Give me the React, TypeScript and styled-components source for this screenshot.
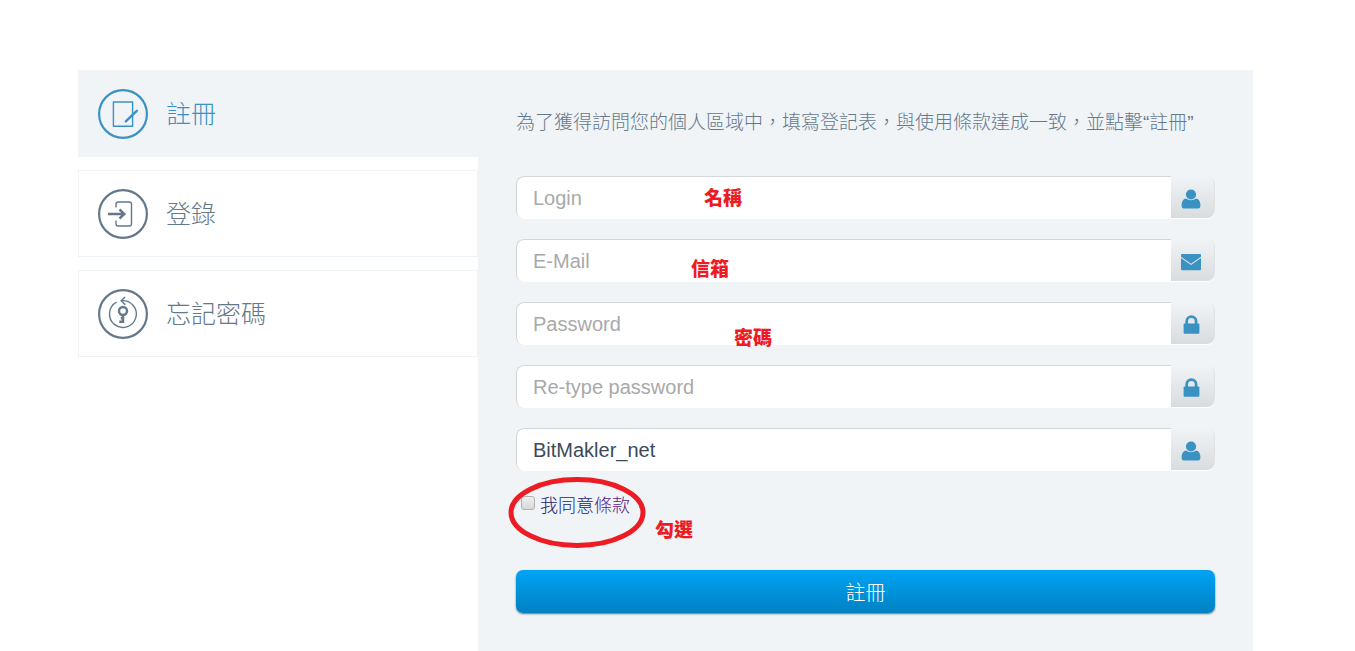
import React from "react";
import styled, { createGlobalStyle } from "styled-components";

const sans = `"Liberation Sans", Arial, "Noto Sans CJK TC", sans-serif`;
const accent = "#3a92c3";
const slate = "#64788a";
const panel = "#f0f4f7";

const GlobalStyle = createGlobalStyle`
  *, *::before, *::after { box-sizing: border-box; }
  body { margin: 0; background: #fff; font-family: ${sans}; }
`;

const Page = styled.main`
  display: flex;
  align-items: stretch;
  padding: 70px 102px 0 78px;
`;

const Tabs = styled.nav`
  flex: 0 0 400px;
  display: flex;
  flex-direction: column;
  gap: 13px;
`;

const Tab = styled.a<{ $active?: boolean }>`
  display: flex;
  align-items: center;
  gap: 18px;
  height: 87px;
  padding: 0 19px;
  border: 1px solid ${panel};
  background: ${(p) => (p.$active ? panel : "#fff")};
  color: ${(p) => (p.$active ? accent : slate)};
  font-size: 25px;
  font-weight: 300;
  line-height: 36px;
  text-decoration: none;
`;

const Panel = styled.form`
  flex: 1;
  min-width: 0;
  padding: 38px;
  background: ${panel};
`;

const Intro = styled.p`
  margin: 0 0 38px;
  color: #66788a;
  font-size: 19px;
  font-weight: 300;
  line-height: 30px;
`;

const Fields = styled.div`
  display: flex;
  flex-direction: column;
  gap: 20px;
`;

const Field = styled.label`
  position: relative;
  display: flex;
  height: 43px;
  border-radius: 8px;
  background: #fff;
`;

const TextInput = styled.input`
  flex: 1;
  min-width: 0;
  height: 43px;
  padding: 0 16px;
  border: 0 solid #d3d7da;
  border-width: 1px 0 0 1px;
  border-radius: 8px 0 0 8px;
  outline: 0;
  background: #fff;
  color: #3b4a5a;
  font-family: ${sans};
  font-size: 20px;
  &::placeholder { color: #a9a9a9; opacity: 1; }
`;

const Addon = styled.span`
  flex: 0 0 44px;
  display: flex;
  align-items: center;
  justify-content: center;
  height: 42px;
  padding: 4px 4px 0 0;
  border-right: 1px solid #dfe3e6;
  border-radius: 0 8px 8px 0;
  background: linear-gradient(#f0f4f7, #d9dcdf);
  color: ${accent};
`;

const Note = styled.span<{ $left: number; $top: number }>`
  position: absolute;
  left: ${(p) => p.$left}px;
  top: ${(p) => p.$top}px;
  color: #ed1c24;
  font-family: "Noto Sans CJK TC", sans-serif;
  font-size: 19px;
  font-weight: 900;
  line-height: 20px;
  white-space: nowrap;
  pointer-events: none;
`;

const Agree = styled.div`
  position: relative;
  display: flex;
  align-items: flex-start;
  gap: 5px;
  margin: 20px 0 49px;
  padding-left: 5px;
  color: #23236f;
  font-size: 18px;
  font-weight: 300;
  line-height: 30px;
`;

const Checkbox = styled.input`
  appearance: none;
  width: 14px;
  height: 14px;
  margin: 5px 0 0;
  border: 1px solid #b0b0b0;
  border-radius: 3px;
  background: linear-gradient(#eee, #d8d8d8);
  &:checked { background: ${accent}; }
`;

const TermsLink = styled.a`
  color: #551a8b;
  text-decoration: none;
`;

const Ring = styled.svg`
  position: absolute;
  left: -8px;
  top: -15px;
  overflow: visible;
  pointer-events: none;
`;

const Submit = styled.button`
  display: block;
  width: 100%;
  height: 43px;
  padding: 2px 0 0;
  border: 0;
  border-radius: 7px;
  background: linear-gradient(#00a4f5, #0081c2);
  box-shadow: 0 1px 2px rgba(0, 0, 0, 0.55);
  color: #fff;
  font-family: ${sans};
  font-size: 20px;
  font-weight: 300;
  line-height: 40px;
`;

function Badge({ color, children }: { color: string; children: React.ReactNode }) {
  return (
    <svg width="50" height="50" viewBox="0 0 50 50" fill="none" stroke={color} aria-hidden="true">
      <circle cx="25" cy="25" r="23.9" strokeWidth="2.2" />
      {children}
    </svg>
  );
}

const RegisterIcon = () => (
  <Badge color={accent}>
    <rect x="15.4" y="13" width="19.2" height="24.2" strokeWidth="1.4" strokeLinejoin="round" />
    <path d="M27.8 32.4L38.8 21.8" strokeWidth="2.4" strokeLinecap="round" />
  </Badge>
);

const LoginIcon = () => (
  <Badge color={slate}>
    <path d="M18 18.5V15.2Q18 13 20.2 13H31.3Q33.5 13 33.5 15.2V34.8Q33.5 37 31.3 37H20.2Q18 37 18 34.8V31.5" strokeWidth="1.4" />
    <path d="M10 25H26M21.5 20.5L26.3 25L21.5 29.5" strokeWidth="2.4" />
  </Badge>
);

const RecoverIcon = () => (
  <Badge color={slate}>
    <path d="M23.5 11.7A13.4 13.4 0 1 1 18.6 13.2" strokeWidth="1.4" />
    <path d="M27 8L23.2 11.8L27.3 15.8" strokeWidth="1.5" />
    <circle cx="25" cy="22" r="4" strokeWidth="2.4" />
    <path d="M25 26V34M25 32.7H21.3M25 29.3H22.8" strokeWidth="2.4" />
  </Badge>
);

const UserIcon = () => (
  <svg width="20" height="20" viewBox="0 0 20 20" fill="currentColor" aria-hidden="true">
    <circle cx="10" cy="5.5" r="5.1" />
    <path d="M4.8 9.6Q10 13 15.2 9.6Q19.4 10.6 19.4 16.6Q19.4 19.6 17.2 19.6H2.8Q0.6 19.6 0.6 16.6Q0.6 10.6 4.8 9.6Z" />
  </svg>
);

const MailIcon = () => (
  <svg width="20" height="20" viewBox="0 0 20 20" fill="currentColor" aria-hidden="true">
    <path d="M1 2H19Q20 2 20 3V4.8L10 11.8L0 4.8V3Q0 2 1 2Z" />
    <path d="M0 6L10 13L20 6V17.2Q20 18.2 19 18.2H1Q0 18.2 0 17.2Z" />
  </svg>
);

const LockIcon = () => (
  <svg width="20" height="20" viewBox="0 0 20 20" aria-hidden="true">
    <path d="M5.7 10V6.3A4.7 4.7 0 0 1 15.1 6.3V10" fill="none" stroke="currentColor" strokeWidth="2.7" />
    <rect x="2.6" y="8.6" width="15.8" height="10.2" rx="1" fill="currentColor" />
  </svg>
);

const fields = [
  { name: "login", type: "text", label: "Login", icon: <UserIcon />, note: { text: "名稱", left: 188, top: 11 } },
  { name: "email", type: "email", label: "E-Mail", icon: <MailIcon />, note: { text: "信箱", left: 175, top: 19 } },
  { name: "password", type: "password", label: "Password", icon: <LockIcon />, note: { text: "密碼", left: 218, top: 25 } },
  { name: "password2", type: "password", label: "Re-type password", icon: <LockIcon /> },
  { name: "referrer", type: "text", label: "Referrer", icon: <UserIcon />, value: "BitMakler_net" },
];

export default function App() {
  return (
    <>
      <GlobalStyle />
      <Page lang="zh-TW">
        <Tabs>
          <Tab href="#register" $active aria-current="page">
            <RegisterIcon />
            註冊
          </Tab>
          <Tab href="#login">
            <LoginIcon />
            登錄
          </Tab>
          <Tab href="#recover">
            <RecoverIcon />
            忘記密碼
          </Tab>
        </Tabs>
        <Panel onSubmit={(e) => e.preventDefault()}>
          <Intro>為了獲得訪問您的個人區域中，填寫登記表，與使用條款達成一致，並點擊“註冊”</Intro>
          <Fields>
            {fields.map((f) => (
              <Field key={f.name}>
                <TextInput
                  name={f.name}
                  type={f.type}
                  aria-label={f.label}
                  placeholder={f.value ? undefined : f.label}
                  defaultValue={f.value}
                />
                <Addon>{f.icon}</Addon>
                {f.note && (
                  <Note $left={f.note.left} $top={f.note.top}>
                    {f.note.text}
                  </Note>
                )}
              </Field>
            ))}
          </Fields>
          <Agree>
            <Checkbox type="checkbox" id="agree" />
            <label htmlFor="agree">
              我同意<TermsLink href="#terms">條款</TermsLink>
            </label>
            <Ring width="138" height="72" viewBox="0 0 138 72" fill="none" aria-hidden="true">
              <ellipse cx="69" cy="36.5" rx="66" ry="33" stroke="#ed1c24" strokeWidth="5" />
            </Ring>
            <Note $left={139} $top={28}>勾選</Note>
          </Agree>
          <Submit type="submit">註冊</Submit>
        </Panel>
      </Page>
    </>
  );
}
